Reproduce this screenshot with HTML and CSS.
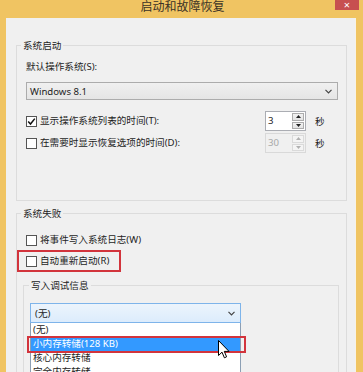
FILE: index.html
```html
<!DOCTYPE html>
<html lang="zh-CN">
<head>
    <meta charset="UTF-8">
    <title>启动和故障恢复</title>
    <link rel="stylesheet" href="styles.css">
</head>
<body>

    <div class="window">
        <div class="titlebar">
            <div class="title">启动和故障恢复</div>
            <div class="close">×</div>
        </div>

        <div class="client">
            <!-- 系统启动 -->
            <fieldset class="group group-start">
                <legend>系统启动</legend>
                <div class="group-body">
                    <div class="field-label">默认操作系统(S):</div>
                    <div class="combo">
                        <span>Windows 8.1</span>
                        <svg class="chevron" width="7" height="5" viewBox="0 0 7 5"><path d="M0.5 0.8 L3.5 3.8 L6.5 0.8" fill="none" stroke="#444" stroke-width="1.2"/></svg>
                    </div>

                    <div class="spin-row spin-row-first">
                        <label class="check">
                            <span class="box"><svg width="9" height="9" viewBox="0 0 9 9"><path d="M1.2 4.6 L3.5 7 L7.8 1.6" fill="none" stroke="#111" stroke-width="1.5"/></svg></span>
                            显示操作系统列表的时间(T):
                        </label>
                        <div class="spin">
                            <span class="spin-value">3</span>
                            <span class="spin-btns">
                                <span class="spin-btn"><svg width="5" height="3" viewBox="0 0 5 3"><path d="M0 3 L2.5 0 L5 3 Z" fill="#222"/></svg></span>
                                <span class="spin-btn"><svg width="5" height="3" viewBox="0 0 5 3"><path d="M0 0 L2.5 3 L5 0 Z" fill="#222"/></svg></span>
                            </span>
                        </div>
                        <span class="unit">秒</span>
                    </div>

                    <div class="spin-row">
                        <label class="check">
                            <span class="box"></span>
                            在需要时显示恢复选项的时间(D):
                        </label>
                        <div class="spin disabled">
                            <span class="spin-value">30</span>
                            <span class="spin-btns">
                                <span class="spin-btn"><svg width="5" height="3" viewBox="0 0 5 3"><path d="M0 3 L2.5 0 L5 3 Z" fill="#b0b0b0"/></svg></span>
                                <span class="spin-btn"><svg width="5" height="3" viewBox="0 0 5 3"><path d="M0 0 L2.5 3 L5 0 Z" fill="#b0b0b0"/></svg></span>
                            </span>
                        </div>
                        <span class="unit">秒</span>
                    </div>
                </div>
            </fieldset>

            <!-- 系统失败 -->
            <fieldset class="group group-fail">
                <legend>系统失败</legend>
                <div class="group-body">
                    <label class="check check-log">
                        <span class="box"></span>
                        将事件写入系统日志(W)
                    </label>

                    <div class="marked">
                        <label class="check">
                            <span class="box"></span>
                            自动重新启动(R)
                        </label>
                    </div>

                    <fieldset class="group group-debug">
                        <legend>写入调试信息</legend>
                        <div class="group-body">
                            <div class="combo combo-open">
                                <span>(无)</span>
                                <svg class="chevron" width="7" height="5" viewBox="0 0 7 5"><path d="M0.5 0.8 L3.5 3.8 L6.5 0.8" fill="none" stroke="#444" stroke-width="1.2"/></svg>
                            </div>
                            <ul class="dropdown">
                                <li>(无)</li>
                                <li class="selected">小内存转储(128 KB)
                                    <svg class="cursor" width="12" height="19" viewBox="0 0 12 19"><path d="M0.5 0.5 L0.5 15.5 L4 12.2 L6.4 17.8 L8.6 16.8 L6.3 11.4 L11 11.4 Z" fill="#fff" stroke="#000" stroke-width="1"/></svg>
                                </li>
                                <li>核心内存转储</li>
                                <li>完全内存转储</li>
                            </ul>
                        </div>
                    </fieldset>
                </div>
            </fieldset>
        </div>
    </div>

</body>
</html>
```

FILE: styles.css
```css
body {
    margin: 0;
    background: #f0c462;
    font-family: "Noto Sans", "Noto Sans CJK SC", sans-serif;
    font-size: 9.6px;
    color: #1e1e1e;
}
.window {
    width: 363px;
    height: 372px;
    overflow: hidden;
    background: #f0c462;
}
.titlebar {
    position: relative;
    height: 18px;
}
.title {
    text-align: center;
    font-family: "Noto Sans CJK SC", sans-serif;
    font-size: 12px;
    line-height: 11px;
    color: #3a3226;
    padding-left: 2px;
}
.close {
    position: absolute;
    top: 0;
    left: 335px;
    width: 24px;
    height: 10px;
    background: #c75050;
    color: #fff;
    font-size: 11px;
    line-height: 9px;
    text-align: center;
}
.client {
    margin-left: 6px;
    width: 350px;
    height: 354px;
    background: #f0f0f0;
    border-right: 1px solid #f7f2e6;
    padding: 0 8px 0 10px;
    box-sizing: border-box;
    overflow: hidden;
}

/* group boxes */
.group {
    margin: 0;
    padding: 0;
    border: 1px solid #dcdcdc;
    min-width: 0;
}
.group legend {
    margin-left: 4px;
    padding: 0 2px;
    line-height: 11px;
    color: #222;
}
.group-start {
    margin-top: 22px;
}
.group-start > .group-body {
    padding: 10px 8px 47px 9px;
}
.group-fail {
    margin-top: 7px;
}
.group-fail > .group-body {
    padding: 14px 0 0 0;
}
.group-debug {
    margin: 8px 7px 0 6px;
}
.group-debug legend {
    margin-left: 5px;
}
.group-debug > .group-body {
    padding: 12px 6px 20px 6px;
}

.field-label {
    line-height: 12px;
}

/* combo boxes */
.combo {
    margin-top: 9px;
    height: 18px;
    border: 1px solid #acacac;
    background: linear-gradient(#f0f0f0, #e5e5e5);
    display: flex;
    align-items: center;
    justify-content: space-between;
    padding: 0 5px 0 3px;
    box-sizing: border-box;
}
.combo-open {
    margin-top: 0;
    width: 211px;
    height: 20px;
    border-color: #7eb4ea;
    background: linear-gradient(#ecf4fc, #dcecfc);
    padding-left: 4px;
}

/* checkboxes */
.check {
    display: flex;
    align-items: center;
    gap: 3px;
    line-height: 14px;
    white-space: nowrap;
}
.box {
    width: 11px;
    height: 11px;
    border: 1px solid #555;
    background: #fff;
    box-sizing: border-box;
    display: flex;
    align-items: center;
    justify-content: center;
    flex-shrink: 0;
}
.check-log {
    margin-left: 9px;
}
.marked {
    margin-top: 3px;
    width: fit-content;
    border: 2px solid #d2343c;
    padding: 2px 10px 2px 7px;
}

/* spinners */
.spin-row {
    display: grid;
    grid-template-columns: 230px 41px auto;
    column-gap: 9px;
    align-items: center;
    height: 20px;
    margin-top: 2px;
}
.spin-row-first {
    margin-top: 11px;
}
.spin {
    display: flex;
    height: 20px;
    border: 1px solid #abadb3;
    background: #fff;
    box-sizing: border-box;
}
.spin-value {
    flex: 1;
    padding-left: 2px;
    line-height: 17px;
}
.spin-btns {
    width: 12px;
    display: flex;
    flex-direction: column;
    gap: 1px;
    padding: 1px 1px 1px 0;
}
.spin-btn {
    flex: 1;
    border: 1px solid #acacac;
    background: linear-gradient(#f2f2f2, #e3e3e3);
    display: flex;
    align-items: center;
    justify-content: center;
}
.spin.disabled {
    border-color: #d9d9d9;
    background: #f0f0f0;
    color: #a8a8a8;
}
.spin.disabled .spin-btn {
    border-color: #dadada;
    background: #f4f4f4;
}
.unit {
    font-family: "Noto Sans CJK SC", sans-serif;
}

/* dropdown list */
.dropdown {
    list-style: none;
    margin: 0;
    padding: 0;
    width: 211px;
    border: 1px solid #8c9fb4;
    border-top: none;
    background: #fff;
    box-sizing: border-box;
}
.dropdown li {
    position: relative;
    height: 14px;
    line-height: 14px;
    padding-left: 2px;
}
.dropdown li.selected {
    background: #3399ff;
    color: #fff;
}
.dropdown li.selected::after {
    content: "";
    position: absolute;
    left: -4px;
    right: -6px;
    top: -1px;
    bottom: -2px;
    border: 2px solid #d2343c;
}
.cursor {
    position: absolute;
    left: 187px;
    top: 3px;
    z-index: 2;
}
```
